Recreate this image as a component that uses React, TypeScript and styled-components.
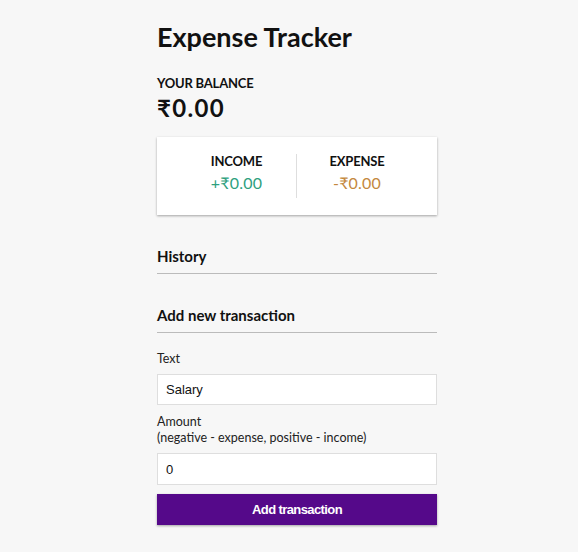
import React, { useState } from "react";
import styled, { createGlobalStyle } from "styled-components";

const GlobalStyle = createGlobalStyle`
  html, body { margin: 0; padding: 0; }
  body {
    background: #f7f7f7;
    font-family: Lato, "Open Sans", sans-serif;
    color: #111;
  }
  * { box-sizing: border-box; }
`;

const Page = styled.div`
  display: flex;
  justify-content: center;
  padding: 21px 0 20px 16px;
`;

const Container = styled.div`
  width: 280px;
  display: flex;
  flex-direction: column;
`;

const Title = styled.h2`
  margin: 0 0 23px;
  font-size: 27px;
  font-weight: 700;
  line-height: 1.2;
  color: #111;
`;

const BalanceLabel = styled.h4`
  margin: 0;
  font-size: 13px;
  font-weight: 700;
  line-height: 1.2;
  letter-spacing: -0.2px;
  text-transform: uppercase;
`;

const Balance = styled.h1`
  margin: 2px 0 14px;
  font-size: 24px;
  font-weight: 700;
  line-height: 1.2;
  letter-spacing: 1.3px;
`;

const Card = styled.div`
  background: #fff;
  box-shadow: 0 1px 3px rgba(0, 0, 0, 0.12), 0 1px 2px rgba(0, 0, 0, 0.24);
  padding: 17px 20px 17px;
  display: grid;
  grid-template-columns: 1fr 1fr;
`;

const Column = styled.div<{ $divider?: boolean }>`
  text-align: center;
  border-right: ${(p) => (p.$divider ? "1px solid #dedede" : "none")};
`;

const ColLabel = styled.h4`
  margin: 0;
  font-size: 13px;
  font-weight: 700;
  line-height: 1.2;
  letter-spacing: -0.2px;
  text-transform: uppercase;
`;

const Money = styled.p<{ $kind: "plus" | "minus" }>`
  margin: 4px 0 5px;
  font-size: 16px;
  line-height: 1.2;
  letter-spacing: 0.2px;
  color: ${(p) => (p.$kind === "plus" ? "#2e9f7e" : "#c4883d")};
`;

const SectionTitle = styled.h3`
  margin: 32px 0 0;
  padding-bottom: 8px;
  border-bottom: 1px solid #bbb;
  font-size: 15px;
  font-weight: 700;
  line-height: 1.2;
`;

const Form = styled.form`
  margin-top: 18px;
  display: flex;
  flex-direction: column;
`;

const FormControl = styled.div`
  display: flex;
  flex-direction: column;
  gap: 8px;
  margin-bottom: 9px;
`;

const Label = styled.label`
  font-size: 12.5px;
  line-height: 1.25;
  color: #222;
`;

const Input = styled.input<{ $h: number }>`
  height: ${(p) => p.$h}px;
  border: 1px solid #dedede;
  background: #fff;
  padding: 0 8px;
  font-family: "Liberation Sans", Arial, sans-serif;
  font-size: 13px;
  color: #111;
  outline: none;
`;

const Button = styled.button`
  height: 31px;
  border: 0;
  background: #55098a;
  color: #fff;
  font-family: "Liberation Sans", Arial, sans-serif;
  font-weight: 700;
  font-size: 13px;
  letter-spacing: -0.6px;
  box-shadow: 0 1px 3px rgba(0, 0, 0, 0.12), 0 1px 2px rgba(0, 0, 0, 0.24);
  cursor: pointer;
`;

export default function App() {
  const [text, setText] = useState("Salary");
  const [amount, setAmount] = useState("0");
  return (
    <>
      <GlobalStyle />
      <Page>
        <Container>
          <Title>Expense Tracker</Title>
          <BalanceLabel>Your Balance</BalanceLabel>
          <Balance>₹0.00</Balance>
          <Card>
            <Column $divider>
              <ColLabel>Income</ColLabel>
              <Money $kind="plus">+₹0.00</Money>
            </Column>
            <Column>
              <ColLabel>Expense</ColLabel>
              <Money $kind="minus">-₹0.00</Money>
            </Column>
          </Card>
          <SectionTitle>History</SectionTitle>
          <SectionTitle>Add new transaction</SectionTitle>
          <Form onSubmit={(e) => e.preventDefault()}>
            <FormControl>
              <Label htmlFor="text">Text</Label>
              <Input id="text" $h={31} value={text} onChange={(e) => setText(e.target.value)} />
            </FormControl>
            <FormControl>
              <Label htmlFor="amount">
                Amount <br />
                (negative - expense, positive - income)
              </Label>
              <Input id="amount" $h={32} value={amount} onChange={(e) => setAmount(e.target.value)} />
            </FormControl>
            <Button type="submit">Add transaction</Button>
          </Form>
        </Container>
      </Page>
    </>
  );
}
